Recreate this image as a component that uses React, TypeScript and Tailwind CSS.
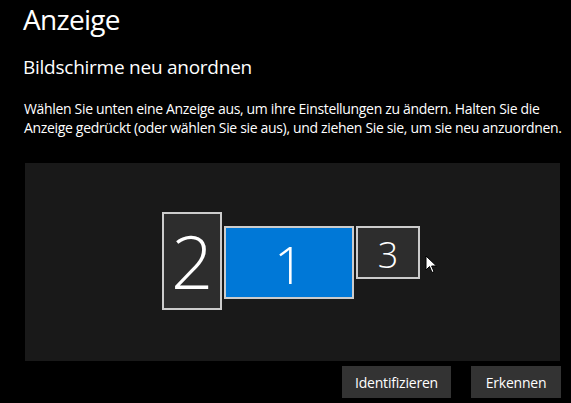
export default function App() {
  return (
    <div
      className="w-[571px] h-[403px] bg-black text-white overflow-hidden flex flex-col"
      style={{ fontFamily: '"Open Sans", "Noto Sans", sans-serif' }}
    >
      <h1 className="pl-[23px] pt-[1px] text-[28px] leading-[36px] font-normal tracking-[-0.7px]">Anzeige</h1>
      <h2 className="pl-[23px] mt-[17px] text-[19px] leading-[26px] tracking-[-0.25px]">Bildschirme neu anordnen</h2>
      <p className="pl-[24px] mt-[19px] text-[14px] leading-[19px] tracking-[-0.33px] whitespace-nowrap">
        Wählen Sie unten eine Anzeige aus, um ihre Einstellungen zu ändern. Halten Sie die
        <br />
        Anzeige gedrückt (oder wählen Sie sie aus), und ziehen Sie sie, um sie neu anzuordnen.
      </p>

      {/* Arrangement canvas */}
      <div className="ml-[25px] mt-[26px] w-[535px] h-[198px] bg-[#191919] relative">
        <div className="absolute left-[137px] top-[49px] w-[60px] h-[98px] bg-[#2d2d2d] border-2 border-[#cccccc] flex items-center justify-center">
          <span className="text-[74px] leading-none font-light">2</span>
        </div>
        <div className="absolute left-[199px] top-[63px] w-[130px] h-[73px] bg-[#0078d7] border-2 border-[#cccccc] flex items-center justify-center">
          <span className="text-[52px] leading-none font-light pt-[2px]">1</span>
        </div>
        <div className="absolute left-[331px] top-[63px] w-[64px] h-[53px] bg-[#2d2d2d] border-2 border-[#cccccc] flex items-center justify-center">
          <span className="text-[36px] leading-none font-light pt-[4px]">3</span>
        </div>
        {/* mouse pointer */}
        <svg className="absolute left-[400px] top-[92px]" width="13" height="19" viewBox="0 0 13 19">
          <path d="M1 1 L1 15 L4.5 11.5 L7 17.5 L9 16.6 L6.6 11 L11.5 11 Z" fill="#fff" stroke="#000" strokeWidth="1" />
        </svg>
      </div>

      <div className="flex justify-end gap-[20px] pr-[10px] mt-[5px]">
        <button className="w-[109px] h-[32px] bg-[#333333] text-[14px] text-white tracking-[-0.2px]">Identifizieren</button>
        <button className="w-[90px] h-[32px] bg-[#333333] text-[14px] text-white tracking-[-0.2px]">Erkennen</button>
      </div>
    </div>
  )
}
